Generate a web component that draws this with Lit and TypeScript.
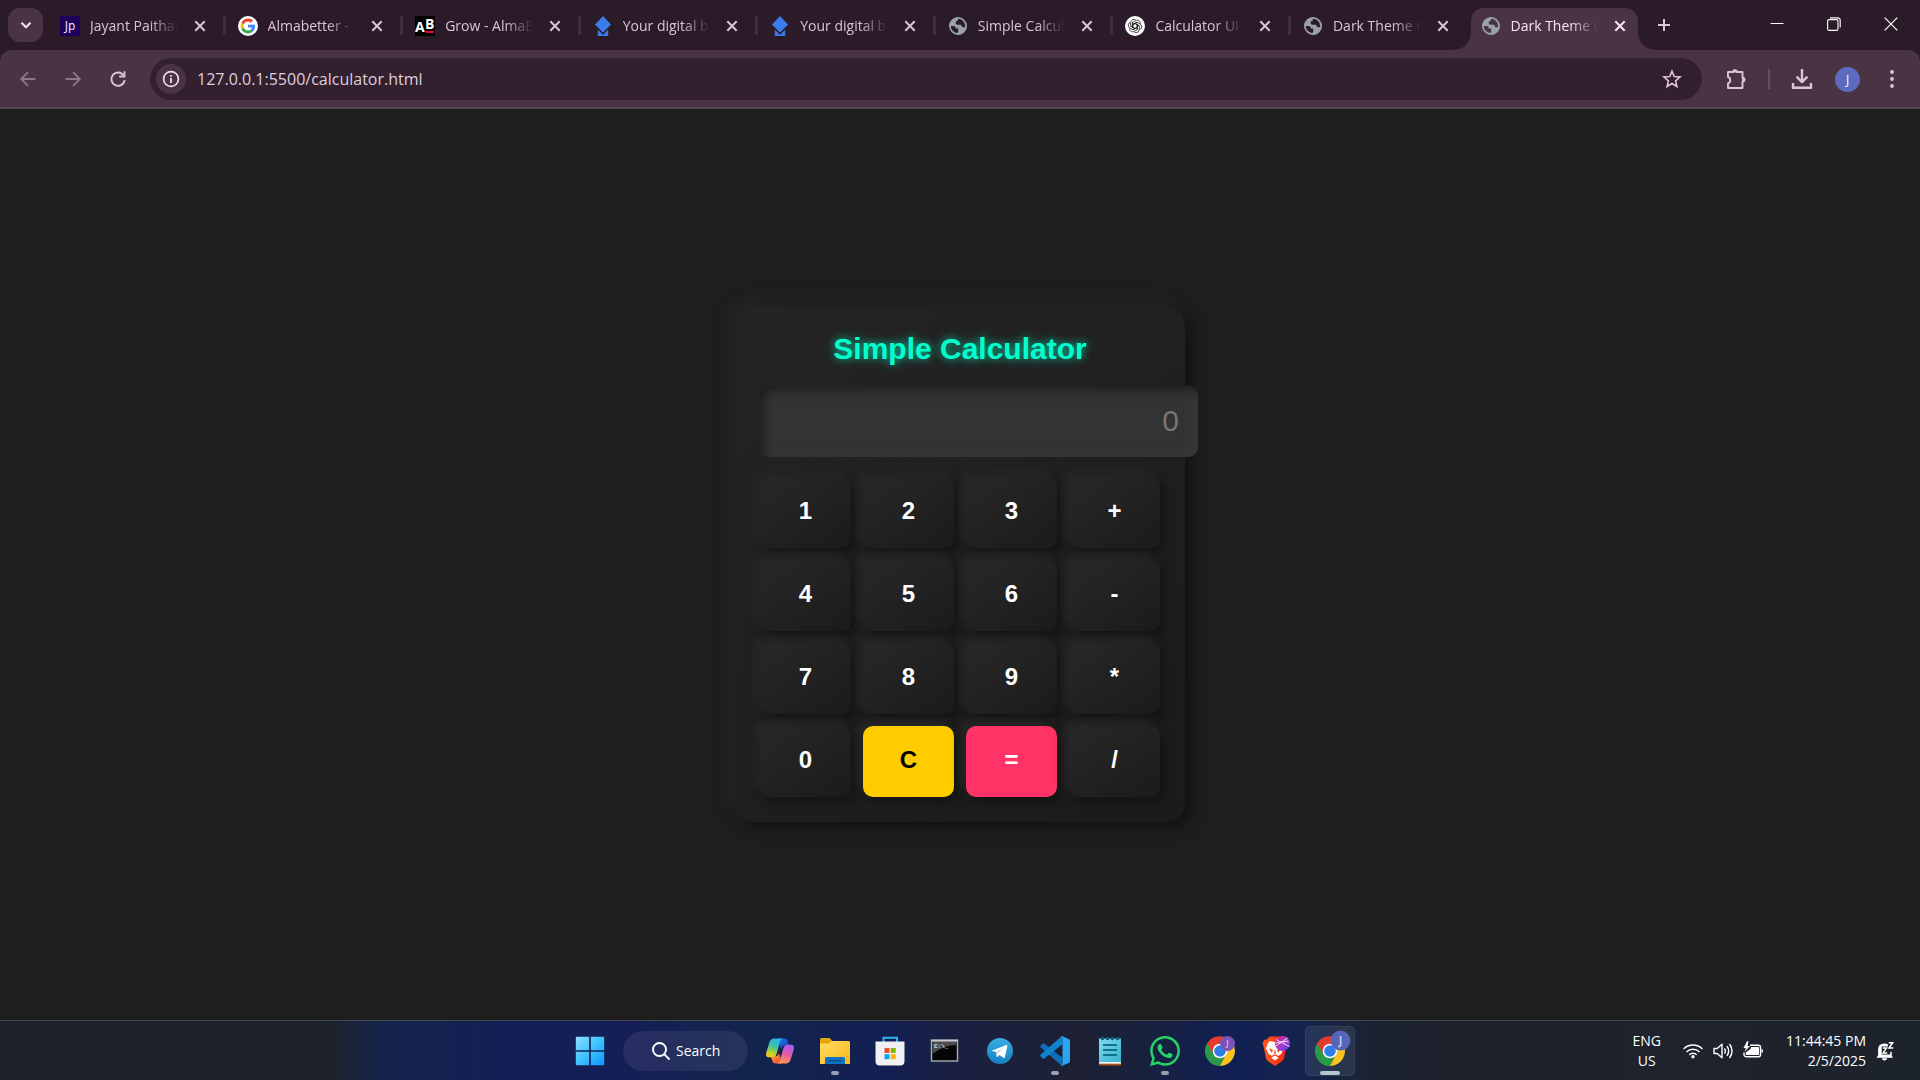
import { LitElement, html, svg, css, type TemplateResult } from "lit";
import { customElement, state, property } from "lit/decorators.js";
import { classMap } from "lit/directives/class-map.js";

type Icon = TemplateResult;

/* ---------- favicons ---------- */

const favJp: Icon = html`<svg viewBox="0 0 20 20" width="20" height="20" aria-hidden="true">
  <rect width="20" height="20" fill="#1d005c" />
  <text x="10" y="14" font-size="12" text-anchor="middle" fill="#f4eeff" font-family="Open Sans, sans-serif">Jp</text>
</svg>`;

const favGoogle: Icon = html`<svg viewBox="0 0 20 20" width="20" height="20" aria-hidden="true">
  <circle cx="10" cy="10" r="10" fill="#fff" />
  <g transform="translate(2.6 2.6) scale(0.308)">
    <path fill="#EA4335" d="M24 9.5c3.54 0 6.71 1.22 9.21 3.6l6.85-6.85C35.9 2.38 30.47 0 24 0 14.62 0 6.51 5.38 2.56 13.22l7.98 6.19C12.43 13.72 17.74 9.5 24 9.5z" />
    <path fill="#4285F4" d="M46.98 24.55c0-1.57-.15-3.09-.38-4.55H24v9.02h12.94c-.58 2.96-2.26 5.48-4.78 7.18l7.73 6c4.51-4.18 7.09-10.36 7.09-17.65z" />
    <path fill="#FBBC05" d="M10.53 28.59c-.48-1.45-.76-2.99-.76-4.59s.27-3.14.76-4.59l-7.98-6.19C.92 16.46 0 20.12 0 24c0 3.88.92 7.54 2.56 10.78l7.97-6.19z" />
    <path fill="#34A853" d="M24 48c6.48 0 11.93-2.13 15.89-5.81l-7.73-6c-2.15 1.45-4.92 2.3-8.16 2.3-6.26 0-11.57-4.22-13.47-9.91l-7.98 6.19C6.51 42.62 14.62 48 24 48z" />
  </g>
</svg>`;

const favAb: Icon = html`<svg viewBox="0 0 20 20" width="20" height="20" aria-hidden="true">
  <rect width="20" height="20" fill="#000" />
  <text x="0" y="16" font-size="14" font-weight="700" fill="#fff" font-family="Open Sans, sans-serif">A</text>
  <text x="10" y="13" font-size="14" font-weight="700" fill="#fff" font-family="Open Sans, sans-serif">B</text>
  <rect x="10.5" y="15" width="8.5" height="2" fill="#e5092f" />
</svg>`;

const favDiamond: Icon = html`<svg viewBox="0 0 20 20" width="20" height="20" aria-hidden="true">
  <path fill="#3b7bea" d="M10 0l8 8.5-8 8.3-8-8.3z" />
  <path fill="#3b7bea" d="M4.8 13.8L10 18.8l5.2-5V20H4.8z" />
  <path fill="none" stroke="#2b1b29" stroke-width="1" d="M4.300 12.100L10 17.800l5.700-5.700" />
</svg>`;

const favGlobe: Icon = html`<svg viewBox="0 0 20 20" width="20" height="20" aria-hidden="true">
  <circle cx="10" cy="10" r="8.1" fill="none" stroke="#9aa0a9" stroke-width="1.8" />
  <path fill="#9aa0a9" d="M10.8 1.6C6 1.2 1.6 5 1.6 10l3.6.1c1.9 0 2.5.8 2.6 2.3h2.4v3.4l-1.7 2.4c5 1.3 9.8-2.3 10-7.8-1.200 1-2.700 1.200-4 .5-1-.5-1.200-1.300-1.300-2.200H9.700c-1.400 0-2-.8-2-2 0-1.300.7-1.900 1.900-2 .2-1.300.5-2.300 1.200-3.100z" />
</svg>`;

const favKnot: Icon = html`<svg viewBox="0 0 20 20" width="20" height="20" aria-hidden="true">
  <circle cx="10" cy="10" r="10" fill="#fff" />
  <g fill="none" stroke="#222" stroke-width="0.800" stroke-linejoin="round">
    ${[0, 60, 120, 180, 240, 300].map(
      (a) => svg`<path transform="rotate(${a} 10 10)" d="M7.700 11.300V6.400L10.700 4.600C12.900 3.300 15.700 4.900 15.500 7.600M7.700 8.700L10 7.400l4.400 2.500" />`
    )}
  </g>
</svg>`;

/* ---------- browser glyphs ---------- */

const stroke = (d: string, size = 20, width = 2): Icon => html`<svg
  viewBox="0 0 20 20" width=${size} height=${size} fill="none" stroke="currentColor" stroke-width=${width} aria-hidden="true"
><path d=${d} /></svg>`;

const closeIcon = stroke("M5.300 5.300l9.400 9.400M14.700 5.300l-9.400 9.400");
const chevronIcon = stroke("M5.500 7.800l4.500 4.500 4.500-4.500", 20, 2.2);
const plusIcon = stroke("M10 4v12M4 10h12");
const backIcon = stroke("M17.500 10H3.500M10 3.200L3.200 10l6.800 6.800", 20, 1.800);
const forwardIcon = stroke("M2.500 10h14M10 3.200l6.800 6.800-6.800 6.800", 20, 1.800);
const reloadIcon = html`<svg viewBox="0 0 20 20" width="20" height="20" aria-hidden="true">
  <path d="M15.600 6.300A6.700 6.700 0 1 0 16.700 11.200" fill="none" stroke="currentColor" stroke-width="2" />
  <path d="M17.400 2.200v6.200h-6.200V6.500h4.300V2.200z" fill="currentColor" />
</svg>`;
const infoIcon = html`<svg viewBox="0 0 20 20" width="20" height="20" aria-hidden="true">
  <circle cx="10" cy="10" r="7.400" fill="none" stroke="currentColor" stroke-width="1.700" />
  <path d="M10 9v5M10 6v1.800" stroke="currentColor" stroke-width="1.800" />
</svg>`;
const starIcon = html`<svg viewBox="0 0 20 20" width="20" height="20" aria-hidden="true">
  <path d="M10 2.200l2.200 5.300 5.800.5-4.400 3.800 1.300 5.700L10 14.500l-4.900 3 1.300-5.700L2 8l5.800-.5z" fill="none" stroke="currentColor" stroke-width="1.600" />
</svg>`;
const puzzleIcon = html`<svg viewBox="0 0 22 22" width="22" height="22" aria-hidden="true">
  <path d="M3 4h5.200a1.700 1.700 0 0 1 3.600 0H17.500v5.600a2 2 0 0 1 0 4V20H3v-4.600a3.400 3.400 0 0 0 0-6.400z" fill="none" stroke="currentColor" stroke-width="1.900" stroke-linejoin="round" />
  <path d="M8.200 4a1.900 1.900 0 0 1 3.800 0zM17.500 9.700a2 2 0 0 1 0 4z" fill="currentColor" stroke="currentColor" stroke-width="1" />
</svg>`;
const downloadIcon = html`<svg viewBox="0 0 22 22" width="22" height="22" aria-hidden="true" fill="none" stroke="currentColor" stroke-width="2.400">
  <path d="M11 1v13M5.600 8.700L11 14.100l5.400-5.400M2 15v4.800h18V15" stroke-linejoin="round" />
</svg>`;
const dotsIcon = html`<svg viewBox="0 0 20 20" width="20" height="20" fill="currentColor" aria-hidden="true">
  <circle cx="10" cy="3" r="1.900" /><circle cx="10" cy="10" r="1.900" /><circle cx="10" cy="17" r="1.900" />
</svg>`;
const minimizeIcon = html`<svg viewBox="0 0 14 14" width="14" height="14" fill="none" stroke="currentColor" aria-hidden="true"><path d="M0.500 6.500h13" /></svg>`;
const restoreIcon = html`<svg viewBox="0 0 14 14" width="14" height="14" fill="none" stroke="currentColor" stroke-width="1.100" aria-hidden="true">
  <rect x="0.600" y="2.600" width="10.400" height="10.800" rx="1.500" /><path d="M3 .9h7.500a2.700 2.700 0 0 1 2.700 2.700V10.500" />
</svg>`;
const winCloseIcon = html`<svg viewBox="0 0 14 14" width="14" height="14" fill="none" stroke="currentColor" stroke-width="1.200" aria-hidden="true"><path d="M.7.7l12.600 12.600M13.300.7L.7 13.300" /></svg>`;

/* ---------- taskbar icons ---------- */

const chromeDisc = svg`
  <path fill="#2a9a48" d="M3.100 8.100L9 18.400A6.900 6.900 0 0 0 21 18.400L15.300 30A15 15 0 0 1 2 7.500z" />
  <path fill="#fcc31e" d="M15 30L21 18.400A6.900 6.900 0 0 0 15 8.100H28.300A15 15 0 0 1 15 30z" />
  <path fill="#e33b2e" d="M2 7.500A15 15 0 0 1 28.100 8.100H15A6.900 6.900 0 0 0 8.800 18z" />
  <circle cx="15" cy="15" r="7.300" fill="#fff" />
  <circle cx="15" cy="15" r="5.800" fill="#2f7de9" />`;

const windowsIcon = html`<svg viewBox="0 0 30 30" width="30" height="30" aria-hidden="true">
  <defs><linearGradient id="win" gradientUnits="userSpaceOnUse" x1="0" y1="0" x2="30" y2="30"><stop offset="0" stop-color="#8fe2ff" /><stop offset=".5" stop-color="#3fc2ff" /><stop offset="1" stop-color="#0a95ff" /></linearGradient></defs>
  <path fill="url(#win)" d="M1.500.8H14.200V14.200H.800V1.500zM15.800.800H28.500l.7.7V14.200H15.800zM.800 15.800H14.200V29.200H1.500l-.7-.7zM15.800 15.800H29.200v12.700l-.7.700H15.800z" />
</svg>`;

const copilotIcon = html`<svg viewBox="0 0 30 30" width="30" height="30" aria-hidden="true">
  <defs>
    <linearGradient id="cpA" x1=".6" y1="0" x2=".3" y2="1"><stop offset="0" stop-color="#28b1f0" /><stop offset=".45" stop-color="#42c3a5" /><stop offset=".75" stop-color="#b5d32c" /><stop offset="1" stop-color="#ffc61a" /></linearGradient>
    <linearGradient id="cpB" x1=".6" y1="0" x2=".3" y2="1"><stop offset="0" stop-color="#a95cf0" /><stop offset=".5" stop-color="#e85aa5" /><stop offset="1" stop-color="#ff9a4a" /></linearGradient>
    <linearGradient id="cpC" x1="0" y1="0" x2="1" y2="1"><stop offset="0" stop-color="#1b77e6" /><stop offset="1" stop-color="#1345b8" /></linearGradient>
    <linearGradient id="cpD" x1="0" y1="0" x2="1" y2="1"><stop offset="0" stop-color="#ffb02e" /><stop offset="1" stop-color="#f4373d" /></linearGradient>
  </defs>
  <path fill="url(#cpC)" d="M13 2.500h6.500c1.800 0 2.700 1.200 3.200 2.800L24 9.500h-3.500c-2.500 0-3.500 1-4.200 3.200L15 10z" />
  <path fill="url(#cpD)" d="M17 27.500h-6.500c-1.800 0-2.700-1.200-3.200-2.800L6 20.500h3.500c2.500 0 3.500-1 4.200-3.200L15 20z" />
  <path fill="url(#cpA)" d="M9.500 2.500H18c-1.700.5-2.500 1.800-3.100 3.800L12 16.500c-.8 2.700-1.800 4.800-4.600 4.800H4C1.300 21.300.6 19.200 1.300 16.500L4.400 6.300C5.200 3.800 6.800 2.500 9.500 2.500z" />
  <path fill="url(#cpB)" d="M20.500 27.500H12c1.700-.5 2.500-1.800 3.100-3.800L18 13.500c.8-2.700 1.800-4.800 4.600-4.800H26c2.700 0 3.400 2.100 2.700 4.800L25.600 23.700c-.8 2.500-2.400 3.800-5.100 3.800z" />
</svg>`;

const explorerIcon = html`<svg viewBox="0 0 30 30" width="30" height="30" aria-hidden="true">
  <defs><linearGradient id="fold" x1="0" y1="0" x2="1" y2="1"><stop offset="0" stop-color="#ffdc66" /><stop offset="1" stop-color="#f9b916" /></linearGradient></defs>
  <path fill="#e5a50a" d="M0 3.500Q0 2 1.500 2H9.500l3 3-3.500 5H0z" />
  <path fill="url(#fold)" d="M0 7.500H8.500L12 5H28.500Q30 5 30 6.500V28H0z" />
  <path fill="#1272c4" d="M5 28v-5.500Q5 21 6.500 21h17q1.500 0 1.500 1.500V28z" />
  <path stroke="#0b4f94" stroke-width="1.500" d="M8.500 24.700h13" />
</svg>`;

const storeIcon = html`<svg viewBox="0 0 30 30" width="30" height="30" aria-hidden="true">
  <path fill="none" stroke="#2db4ee" stroke-width="2" d="M8.500 6.500V1.800h13.500V6.500" />
  <path fill="#f1f1f3" d="M.500 5.500h29V25q0 4.500-4.500 4.500H5Q.500 29.500.500 25z" />
  <path fill="#f04e23" d="M9.500 12H14.500V17H9.500z" /><path fill="#7fba00" d="M15.700 12H20.700V17H15.700z" />
  <path fill="#0aa3ef" d="M9.500 18.200H14.500V23.200H9.500z" /><path fill="#fbb50b" d="M15.700 18.200H20.700V23.200H15.700z" />
</svg>`;

const terminalIcon = html`<svg viewBox="0 0 30 30" width="30" height="30" aria-hidden="true">
  <rect x="1.500" y="4" width="26" height="21" fill="#050505" stroke="#a9adb0" stroke-width="1.400" />
  <path d="M2.500 5h24v4Q14 9 2.500 18z" fill="#4a4c4e" />
  <path d="M1.500 4.800h26" stroke="#c9cdd0" stroke-width="1.500" />
  <text x="4" y="12" font-size="6" font-weight="700" fill="#e6e6e6" font-family="Liberation Mono, monospace">C:\\_</text>
</svg>`;

const telegramIcon = html`<svg viewBox="0 0 30 30" width="30" height="30" aria-hidden="true">
  <defs><linearGradient id="tg" x1="0" y1="0" x2="0" y2="1"><stop offset="0" stop-color="#37aee2" /><stop offset="1" stop-color="#1580c4" /></linearGradient></defs>
  <circle cx="15" cy="15" r="13" fill="url(#tg)" />
  <path fill="#fff" d="M6.500 14.700L21.300 9c.8-.3 1.200.2 1 1.200l-2.400 11c-.2.900-.8 1-1.500.6l-3.900-2.900-1.900 1.900c-.5.400-.9.400-1-.5L10.900 16z" />
  <path fill="#b8d9ee" d="M11 16.300l7.800-4.900-6 6-.6 3.300z" />
</svg>`;

const vscodeIcon = html`<svg viewBox="0 0 30 30" width="30" height="30" aria-hidden="true">
  <path fill="#0a6fb8" d="M.5 9.700L2.700 7.500q.8-.5 1.600 0L22.500 21.700V29.500q-1 .2-1.700-.6L.5 11.300q-.7-.8 0-1.600z" />
  <path fill="#0e84d1" d="M.5 20.300l2.200 2.200q.8.500 1.600 0L22.500 8.300V.5q-1-.2-1.700.6L.5 18.700q-.7.8 0 1.600z" />
  <path fill="#2ba5f2" d="M22.300.300L29 3.200q1 .5 1 1.600V25.200q0 1.100-1 1.600l-6.700 2.900q-1.200.3-1.700-.7 1.900.5 1.900-1.500V2.500q0-2-1.900-1.500.5-1 1.700-.7z" />
</svg>`;

const notepadIcon = html`<svg viewBox="0 0 30 30" width="30" height="30" aria-hidden="true">
  <defs><linearGradient id="np" x1="0" y1="0" x2="1" y2="1"><stop offset="0" stop-color="#7fdcee" /><stop offset="1" stop-color="#37b0d0" /></linearGradient></defs>
  <path fill="#a5541a" d="M4 26h22v3.500H4z" /><path fill="#f3f3f3" d="M4 24h22v3.700H4z" />
  <path fill="url(#np)" d="M4 2.500h22V26H4z" />
  <path stroke="#12718c" stroke-width="1.800" d="M8 9h14M8 14h14M8 19h14" />
  <g fill="#125f7c"><circle cx="7.500" cy="2.500" r="1.800" /><circle cx="12.500" cy="2.500" r="1.800" /><circle cx="17.500" cy="2.500" r="1.800" /><circle cx="22.500" cy="2.500" r="1.800" /></g>
</svg>`;

const whatsappIcon = html`<svg viewBox="0 0 24 24" width="30" height="30" fill="#25d366" aria-hidden="true">
  <path d="M17.472 14.382c-.297-.149-1.758-.867-2.030-.967-.273-.099-.471-.148-.670.150-.197.297-.767.966-.940 1.164-.173.199-.347.223-.644.075-.297-.150-1.255-.463-2.390-1.475-.883-.788-1.480-1.761-1.653-2.059-.173-.297-.018-.458.130-.606.134-.133.298-.347.446-.520.149-.174.198-.298.298-.497.099-.198.050-.371-.025-.520-.075-.149-.669-1.612-.916-2.207-.242-.579-.487-.500-.669-.510-.173-.008-.371-.010-.570-.010-.198 0-.520.074-.792.372-.272.297-1.040 1.016-1.040 2.479 0 1.462 1.065 2.875 1.213 3.074.149.198 2.096 3.200 5.077 4.487.709.306 1.262.489 1.694.625.712.227 1.360.195 1.871.118.571-.085 1.758-.719 2.006-1.413.248-.694.248-1.289.173-1.413-.074-.124-.272-.198-.570-.347m-5.421 7.403h-.004a9.870 9.870 0 0 1-5.031-1.378l-.361-.214-3.741.982.998-3.648-.235-.374a9.860 9.860 0 0 1-1.510-5.260c.001-5.450 4.436-9.884 9.888-9.884 2.640 0 5.122 1.030 6.988 2.898a9.825 9.825 0 0 1 2.893 6.994c-.003 5.450-4.437 9.884-9.885 9.884m8.413-18.297A11.815 11.815 0 0 0 12.050 0C5.495 0 .160 5.335.157 11.892c0 2.096.547 4.142 1.588 5.945L.057 24l6.305-1.654a11.882 11.882 0 0 0 5.683 1.448h.005c6.554 0 11.890-5.335 11.893-11.893a11.821 11.821 0 0 0-3.480-8.413z" />
</svg>`;

const chromeIcon = html`<svg viewBox="0 0 30 30" width="30" height="30" aria-hidden="true">
  ${chromeDisc}
  <circle cx="22.500" cy="7.500" r="7.500" fill="#7a52b8" />
  <text x="22.500" y="11" font-size="9" text-anchor="middle" fill="#eadcff" font-family="Open Sans, sans-serif">J</text>
</svg>`;

const chromeActiveIcon = html`<svg class="spill" viewBox="0 0 30 30" width="30" height="30" aria-hidden="true">
  ${chromeDisc}
  <circle cx="25.500" cy="4.500" r="10" fill="#5566b8" />
  <text x="25.500" y="9" font-size="12" font-weight="600" text-anchor="middle" fill="#ccd2f2" font-family="Open Sans, sans-serif">J</text>
</svg>`;

const braveIcon = html`<svg viewBox="0 0 30 30" width="30" height="30" aria-hidden="true">
  <defs>
    <linearGradient id="br" x1="0" y1="0" x2="1" y2="0"><stop offset="0" stop-color="#ff5a1f" /><stop offset="1" stop-color="#f0250d" /></linearGradient>
    <linearGradient id="bb" x1="0" y1="0" x2="1" y2="1"><stop offset="0" stop-color="#e8246c" /><stop offset=".5" stop-color="#a63bd0" /><stop offset="1" stop-color="#5a3ce0" /></linearGradient>
  </defs>
  <path fill="url(#br)" d="M9.500.5h11L23 3.500l2.800.2 1.700 3.800-1 2.500-2.400 12q-.5 2-2.200 3.200L15 30l-6.900-4.800Q6.400 24 5.900 22L3.500 10l-1-2.500 1.700-3.800L7 3.500z" />
  <path fill="#fff" d="M9.500 5l5.500 1 3.500-.6L16 9l1 3.500 6 1-1.700 4.500-3.300 2-1.500-1.500h-3L12 20l-3.300-2L6 12.500 7.500 8z" />
  <path fill="#f6401a" d="M8.800 12.200l4.200 1.500-1.200 3zM21.200 12.200L17 13.700l1.200 3zM15 13l1 4-1 1-1-1z" />
  <path fill="#fff" d="M15 19.500l3.700 2.300L15 24.500l-3.700-2.700z" />
  <circle cx="22.500" cy="7.500" r="7.500" fill="url(#bb)" />
  <path stroke="#f5d5f5" stroke-width="1" d="M16 3.500L29.500 10.500M27.500 2L16 10M15.500 7l13-2" />
</svg>`;

const searchIcon = html`<svg viewBox="0 0 20 20" width="20" height="20" fill="none" stroke="currentColor" stroke-width="1.900" aria-hidden="true">
  <circle cx="8.500" cy="8.500" r="6.500" /><path d="M13.200 13.200l5.300 5.300" />
</svg>`;
const wifiIcon = html`<svg viewBox="0 0 20 20" width="20" height="20" fill="none" stroke="currentColor" stroke-width="1.500" aria-hidden="true">
  <path d="M.600 8a13.300 13.300 0 0 1 18.800 0M3.500 11a9.200 9.200 0 0 1 13 0M6.300 13.800a5.200 5.200 0 0 1 7.400 0" /><circle cx="10" cy="15.800" r="1.700" fill="currentColor" stroke="none" />
</svg>`;
const volumeIcon = html`<svg viewBox="0 0 20 20" width="20" height="20" fill="none" stroke="currentColor" stroke-width="1.400" stroke-linejoin="round" aria-hidden="true">
  <path d="M1 7.500h3.200L9 3.200v13.600L4.200 12.500H1z" /><path d="M11.500 7.300q1.700 2.700 0 5.400M14 5.200q3.300 4.800 0 9.600M16.500 3q5 7 0 14" />
</svg>`;
const batteryIcon = html`<svg viewBox="0 0 20 20" width="20" height="20" aria-hidden="true">
  <path d="M7 4.300h8.500a2 2 0 0 1 2 2v7.400a2 2 0 0 1-2 2H3a2 2 0 0 1-2-2v-2.200" fill="none" stroke="currentColor" stroke-width="1.400" />
  <path d="M8 6h7.200q.8 0 .8.800v6.400q0 .8-.8.800H3.500q-.8 0-.8-.8v-1.700L7.500 8zM18.500 7.700q1.500.3 1.500 2.300t-1.500 2.300z" fill="currentColor" />
  <path d="M4 .3L.5 7h2.300L1.500 10.700 7 5H4.500L5.500.3z" fill="currentColor" />
</svg>`;
const bellIcon = html`<svg viewBox="0 0 20 20" width="20" height="20" aria-hidden="true">
  <path fill="currentColor" d="M9.500 2.500q2.200 0 3.500 1v2h-6.300v7.900h8.500v-2.500l1.600-.1v4.200l1.200 1.800H1.500l1.600-2.500V8.500q0-6 6.400-6zM6.700 17.300h5.600q-.7 2.200-2.800 2.200t-2.800-2.200z" />
  <path fill="none" stroke="currentColor" stroke-width="1.500" d="M7.800 7h3.700L8.100 11.900h4.100M13.700 1.800h4L14 7h4.200" />
</svg>`;

/* ---------- data ---------- */

interface Tab { title: string; icon: Icon; active?: boolean }

const TABS: Tab[] = [
  { title: "Jayant Paithankar", icon: favJp },
  { title: "Almabetter - Google", icon: favGoogle },
  { title: "Grow - AlmaBetter", icon: favAb },
  { title: "Your digital business", icon: favDiamond },
  { title: "Your digital business", icon: favDiamond },
  { title: "Simple Calculator", icon: favGlobe },
  { title: "Calculator UI Design", icon: favKnot },
  { title: "Dark Theme Calculator", icon: favGlobe },
  { title: "Dark Theme Calculator", icon: favGlobe, active: true },
];

interface App { name: string; icon: Icon; running?: boolean; active?: boolean }

const APPS: App[] = [
  { name: "Copilot", icon: copilotIcon },
  { name: "File Explorer", icon: explorerIcon, running: true },
  { name: "Microsoft Store", icon: storeIcon },
  { name: "Command Prompt", icon: terminalIcon },
  { name: "Telegram", icon: telegramIcon },
  { name: "Visual Studio Code", icon: vscodeIcon, running: true },
  { name: "Notepad", icon: notepadIcon },
  { name: "WhatsApp", icon: whatsappIcon, running: true },
  { name: "Chrome", icon: chromeIcon },
  { name: "Brave", icon: braveIcon },
  { name: "Chrome window", icon: chromeActiveIcon, active: true },
];

const resetButton = css`
  button {
    margin: 0;
    padding: 0;
    border: 0;
    background: none;
    color: inherit;
    font: inherit;
    cursor: pointer;
  }
  svg {
    display: block;
    flex: none;
  }
`;

@customElement("browser-tabs")
export class BrowserTabs extends LitElement {
  @property({ attribute: false }) tabs: Tab[] = [];

  static styles = [
    resetButton,
    css`
      :host {
        display: flex;
        height: 50px;
        background: #2b1b29;
        color: #dcc3d8;
        font-size: 14px;
      }
      .picker {
        display: grid;
        place-items: center;
        width: 35px;
        height: 34px;
        margin: 8px 7px 0 8px;
        border-radius: 12px;
        background: #4a3444;
        color: #f0e0ec;
      }
      .tabs {
        display: flex;
        flex: 0 1 1598px;
        min-width: 0;
      }
      .cell {
        display: flex;
        flex: 1 1 0;
        min-width: 0;
        height: 50px;
      }
      .tab {
        position: relative;
        display: flex;
        flex: 1;
        min-width: 0;
        align-items: center;
        height: 35px;
        margin-top: 8px;
        padding: 0 8px 0 10px;
      }
      .select {
        display: flex;
        flex: 1;
        min-width: 0;
        align-items: center;
        gap: 10px;
        text-align: left;
      }
      .title {
        flex: 1;
        overflow: hidden;
        white-space: nowrap;
        line-height: 24px;
        mask-image: linear-gradient(to right, #000 calc(100% - 30px), transparent calc(100% - 2px));
      }
      .close {
        display: grid;
        place-items: center;
        width: 20px;
        height: 20px;
        margin-left: 10px;
      }
      .sep {
        width: 3px;
        height: 20px;
        margin: 15px 2px 0 5px;
        border-radius: 2px;
        background: #412e3d;
      }
      .sep.hidden {
        visibility: hidden;
      }
      .active .tab {
        padding-bottom: 7px;
        border-radius: 13px 13px 0 0;
        background: #4a3444;
        color: #f6e6f2;
      }
      .active .tab::before,
      .active .tab::after {
        content: "";
        position: absolute;
        bottom: 0;
        width: 16px;
        height: 16px;
      }
      .active .tab::before {
        right: 100%;
        background: radial-gradient(circle at 0 0, transparent 15px, #4a3444 16px);
      }
      .active .tab::after {
        left: 100%;
        background: radial-gradient(circle at 100% 0, transparent 15px, #4a3444 16px);
      }
      .new {
        display: grid;
        place-items: center;
        width: 32px;
        height: 50px;
      }
      .window {
        display: flex;
        margin: 0 1px 0 auto;
        color: #fff;
      }
      .window button {
        display: grid;
        place-items: center;
        width: 57px;
        height: 48px;
      }
    `,
  ];

  render() {
    const activeIndex = this.tabs.findIndex((t) => t.active);
    return html`
      <button class="picker" aria-label="Search tabs">${chevronIcon}</button>
      <div class="tabs">
        ${this.tabs.map(
          (t, i) => html`<div class=${classMap({ cell: true, active: !!t.active })}>
            <div class="tab">
              <button class="select">${t.icon}<span class="title">${t.title}</span></button>
              <button class="close" aria-label="Close tab">${closeIcon}</button>
            </div>
            <span class=${classMap({ sep: true, hidden: i >= activeIndex - 1 })}></span>
          </div>`
        )}
      </div>
      <button class="new" aria-label="New tab">${plusIcon}</button>
      <div class="window">
        <button aria-label="Minimize">${minimizeIcon}</button>
        <button aria-label="Restore">${restoreIcon}</button>
        <button aria-label="Close">${winCloseIcon}</button>
      </div>
    `;
  }
}

@customElement("browser-toolbar")
export class BrowserToolbar extends LitElement {
  static styles = [
    resetButton,
    css`
      :host {
        display: block;
        background: #2b1b29;
      }
      .bar {
        display: flex;
        align-items: center;
        height: 42px;
        padding: 8px 13px 7px 13px;
        border-bottom: 2px solid #4c474c;
        border-radius: 12px 12px 0 0;
        background: #4a3444;
        color: #dfc3da;
      }
      .nav {
        display: flex;
        gap: 15px;
        margin-right: 17px;
      }
      .nav button,
      .action {
        display: grid;
        place-items: center;
        width: 30px;
        height: 42px;
      }
      .nav button:disabled {
        color: #8d7888;
      }
      .omnibox {
        display: flex;
        flex: 1;
        align-items: center;
        height: 42px;
        padding: 0 20px 0 6px;
        box-sizing: border-box;
        border-radius: 21px;
        background: #33202f;
      }
      .info {
        display: grid;
        place-items: center;
        width: 30px;
        height: 30px;
        border-radius: 50%;
        background: #4a3444;
        color: #f0dfec;
      }
      .url {
        flex: 1;
        min-width: 0;
        padding: 0;
        margin-left: 11px;
        border: 0;
        outline: 0;
        background: none;
        color: #dfcfdc;
        font: 16px/24px "Segoe UI", "Open Sans", "Noto Sans", sans-serif;
      }
      .actions {
        display: flex;
        align-items: center;
        margin-left: 19px;
      }
      .sep {
        width: 2px;
        height: 20px;
        margin: 0 17px 0 17px;
        background: #66505f;
      }
      .avatar {
        width: 25px;
        height: 25px;
        margin: 0 17px 0 18px;
        border-radius: 50%;
        background: #5c6bc0;
        color: #fff;
        font-size: 12px;
        line-height: 25px;
      }
    `,
  ];

  render() {
    return html`<div class="bar">
      <div class="nav">
        <button disabled aria-label="Back">${backIcon}</button>
        <button disabled aria-label="Forward">${forwardIcon}</button>
        <button aria-label="Reload">${reloadIcon}</button>
      </div>
      <div class="omnibox">
        <button class="info" aria-label="Site information">${infoIcon}</button>
        <input class="url" aria-label="Address" spellcheck="false" value="127.0.0.1:5500/calculator.html" />
        <button aria-label="Bookmark">${starIcon}</button>
      </div>
      <div class="actions">
        <button class="action" aria-label="Extensions">${puzzleIcon}</button>
        <span class="sep"></span>
        <button class="action" aria-label="Downloads">${downloadIcon}</button>
        <button class="avatar" aria-label="Profile J">J</button>
        <button class="action" aria-label="Menu">${dotsIcon}</button>
      </div>
    </div>`;
  }
}

@customElement("simple-calculator")
export class SimpleCalculator extends LitElement {
  @state() private expr = "";

  static styles = css`
    :host {
      display: block;
      font-family: Arial, "Liberation Sans", sans-serif;
    }
    .card {
      width: 400px;
      padding: 25px;
      border-radius: 19px;
      background: linear-gradient(145deg, #242424, #1b1b1b);
      box-shadow: 6px 6px 13px #121212, -6px -6px 13px #272727;
    }
    .heading {
      margin: 0 0 20px;
      color: #00ffcc;
      font-size: 30px;
      line-height: 34px;
      text-align: center;
      text-shadow: 0 0 10px rgba(0, 255, 204, 0.8);
    }
    .display {
      display: block;
      box-sizing: content-box;
      width: 100%;
      height: 33px;
      margin: 0 0 20px;
      padding: 18px 19px 20px;
      border: 0;
      border-radius: 10px;
      outline: 0;
      background: #333;
      box-shadow: inset 4px 4px 10px #1e1e1e, inset -4px -4px 10px #3c3c3c;
      color: #fff;
      font: 30px/33px Arial, "Liberation Sans", sans-serif;
      text-align: right;
    }
    .display::placeholder {
      color: #757575;
    }
    .keys {
      display: grid;
      grid-template-columns: repeat(4, 1fr);
      gap: 12px;
    }
    .key {
      height: 71px;
      padding: 0 0 3px;
      border: 0;
      border-radius: 10px;
      background: linear-gradient(145deg, #282828, #1b1b1b);
      box-shadow: 5px 5px 10px #141414, -5px -5px 10px #282828;
      color: #fff;
      font: bold 24px/28px Arial, "Liberation Sans", sans-serif;
      cursor: pointer;
    }
    .key.clear {
      background: #ffcc00;
      color: #000;
    }
    .key.equals {
      background: #ff3366;
    }
  `;

  private press(key: string) {
    if (key === "C") this.expr = "";
    else if (key === "=") this.expr = this.evaluate();
    else this.expr += key;
  }

  /** Evaluates the expression with the usual operator precedence. */
  private evaluate(): string {
    const tokens = this.expr.match(/\d+|[-+*/]/g) ?? [];
    const terms: number[] = [];
    let op = "+";
    for (const t of tokens) {
      if (/\d/.test(t)) {
        const n = Number(t);
        if (op === "*") terms.push((terms.pop() ?? 0) * n);
        else if (op === "/") terms.push((terms.pop() ?? 0) / n);
        else terms.push(op === "-" ? -n : n);
      } else op = t;
    }
    return terms.length ? String(terms.reduce((a, b) => a + b, 0)) : "";
  }

  render() {
    return html`<section class="card">
      <h2 class="heading">Simple Calculator</h2>
      <input class="display" type="text" readonly placeholder="0" aria-label="Result" .value=${this.expr} />
      <div class="keys">
        ${[..."123+456-789*0C=/"].map(
          (k) => html`<button
            class=${classMap({ key: true, clear: k === "C", equals: k === "=" })}
            @click=${() => this.press(k)}
          >${k}</button>`
        )}
      </div>
    </section>`;
  }
}

@customElement("desktop-taskbar")
export class DesktopTaskbar extends LitElement {
  @property({ attribute: false }) apps: App[] = [];

  static styles = [
    resetButton,
    css`
      :host {
        display: grid;
        grid-template-columns: 1fr auto 1fr;
        align-items: center;
        height: 59px;
        border-top: 1px solid #44454f;
        background: linear-gradient(
          to right,
          #1e232b 0%,
          #1e222b 17%,
          #14244c 20%,
          #121f56 27%,
          #151f56 33%,
          #13244c 39%,
          #121f54 46%,
          #1a2040 50%,
          #1d2034 56%,
          #17213f 60%,
          #111f54 64%,
          #14244c 68%,
          #1c2230 72%,
          #1e222c 76%,
          #1d232c 100%
        );
        color: #fff;
        font-size: 14px;
      }
      .apps {
        grid-column: 2;
        display: flex;
        align-items: center;
        gap: 5px;
      }
      .app {
        position: relative;
        display: grid;
        place-items: center;
        box-sizing: border-box;
        width: 50px;
        height: 50px;
        border: 1px solid transparent;
        border-radius: 5px;
      }
      .app.active {
        border-color: rgba(255, 255, 255, 0.06);
        background: rgba(255, 255, 255, 0.08);
      }
      .app.running::after,
      .app.active::after {
        content: "";
        position: absolute;
        bottom: 0;
        left: 50%;
        width: 8px;
        height: 4px;
        border-radius: 2px;
        background: #9a9fb0;
        transform: translateX(-50%);
      }
      .app.active::after {
        width: 20px;
        background: #b3c8cc;
      }
      .spill {
        overflow: visible;
      }
      .search {
        display: flex;
        align-items: center;
        gap: 5px;
        box-sizing: border-box;
        width: 125px;
        height: 40px;
        margin: 0 2px 0 3px;
        padding: 0 0 0 28px;
        border-radius: 20px;
        background: rgba(255, 235, 255, 0.08);
      }
      .tray {
        grid-column: 3;
        justify-self: end;
        display: flex;
        align-items: center;
        padding-right: 25px;
        line-height: 20px;
      }
      .lang {
        margin-right: 22px;
        text-align: center;
      }
      .status {
        display: flex;
        gap: 10px;
        margin-right: 23px;
      }
      .clock {
        margin-right: 9px;
        text-align: right;
      }
      .line {
        display: block;
      }
    `,
  ];

  render() {
    return html`
      <nav class="apps">
        <button class="app" aria-label="Start">${windowsIcon}</button>
        <button class="search">${searchIcon}<span>Search</span></button>
        ${this.apps.map(
          (a) => html`<button
            class=${classMap({ app: true, running: !!a.running, active: !!a.active })}
            aria-label=${a.name}
          >${a.icon}</button>`
        )}
      </nav>
      <div class="tray">
        <button class="lang"><span class="line">ENG</span><span class="line">US</span></button>
        <button class="status" aria-label="Network, volume, battery">${wifiIcon}${volumeIcon}${batteryIcon}</button>
        <button class="clock"><span class="line">11:44:45 PM</span><span class="line">2/5/2025</span></button>
        <button aria-label="Notifications">${bellIcon}</button>
      </div>
    `;
  }
}

@customElement("app-root")
export class AppRoot extends LitElement {
  static styles = css`
    :host {
      display: flex;
      flex-direction: column;
      min-height: 100vh;
      background: #1e1e1e;
      font-family: "Segoe UI", "Open Sans", "Noto Sans", sans-serif;
    }
    .page {
      display: flex;
      flex: 1;
      align-items: center;
      justify-content: center;
    }
  `;

  render() {
    return html`
      <browser-tabs .tabs=${TABS}></browser-tabs>
      <browser-toolbar></browser-toolbar>
      <main class="page"><simple-calculator></simple-calculator></main>
      <desktop-taskbar .apps=${APPS}></desktop-taskbar>
    `;
  }
}
